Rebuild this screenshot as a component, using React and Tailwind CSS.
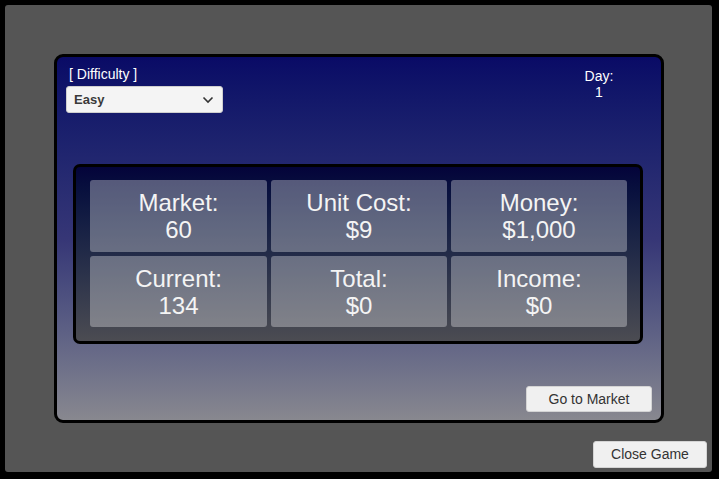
import React from "react";

const stats = [
  ["Market:", "60"],
  ["Unit Cost:", "$9"],
  ["Money:", "$1,000"],
  ["Current:", "134"],
  ["Total:", "$0"],
  ["Income:", "$0"],
];

function Chevron() {
  return (
    <svg width="12" height="8" viewBox="0 0 12 8" className="block">
      <path d="M1.5 1.5 L6 6 L10.5 1.5" fill="none" stroke="#333" strokeWidth="1.6" />
    </svg>
  );
}

export default function App() {
  return (
    <div
      className="w-[719px] h-[479px] bg-black pt-[5px] pl-[5px] pr-[7px] pb-[7px] overflow-hidden"
      style={{ fontFamily: '"Liberation Sans", Arial, sans-serif' }}
    >
      <div className="w-[707px] h-[467px] bg-[#555555] rounded-[3px] flex flex-col pt-[49px] pl-[49px]">
        {/* main game board */}
        <div className="w-[610px] h-[369px] border-[3px] border-black rounded-[9px] bg-gradient-to-b from-[#0a0a66] via-[#363676] to-[#88888f] flex flex-col">
          <div className="flex justify-between">
            <div className="flex flex-col pl-[9px] pt-[9px]">
              <div className="ml-[3px] text-[14px] leading-[16px] text-white">[ Difficulty ]</div>
              <div className="mt-[4px] w-[157px] h-[27px] bg-[#f4f4f4] border border-[#cfcfcf] rounded-[3px] flex items-center justify-between pl-[7px] pr-[8px]">
                <span className="text-[13px] font-bold text-[#3a3a3a]">Easy</span>
                <Chevron />
              </div>
            </div>
            <div className="w-[60px] mr-[32px] pt-[11px] text-center text-white text-[14px] leading-[16px]">
              <div>Day:</div>
              <div>1</div>
            </div>
          </div>

          {/* stats panel */}
          <div className="ml-[16px] mt-[51px] w-[570px] h-[180px] border-[3px] border-black rounded-[7px] bg-gradient-to-b from-[#04043a] to-[#4c4c52] grid grid-cols-[177px_176px_176px] grid-rows-[72px_71px] gap-[4px] pl-[14px] pr-[13px] pt-[13px] pb-[14px]">
            {stats.map(([label, value]) => (
              <div
                key={label}
                className="bg-white/[0.32] rounded-[3px] flex flex-col items-center justify-center text-[#f4f4f4] text-[24px] leading-[27px]"
              >
                <div>{label}</div>
                <div>{value}</div>
              </div>
            ))}
          </div>

          <div className="mt-[42px] ml-auto mr-[9px] w-[126px] h-[26px] bg-[#f0f0f0] border border-[#d4d4d4] rounded-[3px] flex items-center justify-center text-[14px] text-[#333]">
            Go to Market
          </div>
        </div>

        <div className="mt-[18px] ml-auto mr-[5px] w-[114px] h-[27px] bg-[#f0f0f0] border border-[#d4d4d4] rounded-[3px] flex items-center justify-center text-[14px] text-[#333]">
          Close Game
        </div>
      </div>
    </div>
  );
}
